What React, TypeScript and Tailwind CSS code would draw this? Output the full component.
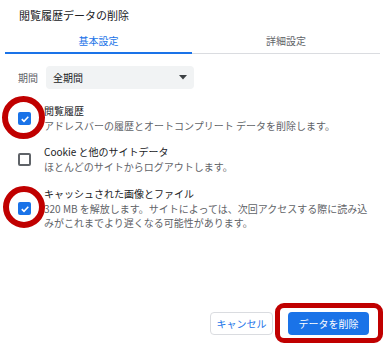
import React from "react";

function Checked() {
  return (
    <div className="w-[13px] h-[13px] rounded-[2px] bg-[#1a73e8] flex items-center justify-center shrink-0">
      <svg width="10" height="10" viewBox="0 0 10 10">
        <path d="M1.8 5.2 L4 7.3 L8.3 2.8" fill="none" stroke="white" strokeWidth="1.6" />
      </svg>
    </div>
  );
}

function Unchecked() {
  return <div className="w-[13px] h-[13px] rounded-[2px] border-2 border-[#5f6368] shrink-0" />;
}

function Item({
  checked,
  title,
  children,
  className,
}: {
  checked: boolean;
  title: string;
  children: React.ReactNode;
  className: string;
}) {
  return (
    <div className={"flex items-center pl-[18px] " + className}>
      {checked ? <Checked /> : <Unchecked />}
      <div className="ml-[13px] w-[330px] text-[10px] leading-[14.5px] whitespace-nowrap">
        <div className="text-[#202124]">{title}</div>
        <div className="text-[#5f6368]">{children}</div>
      </div>
    </div>
  );
}

export default function App() {
  return (
    <div
      className="w-[390px] h-[351px] bg-white relative overflow-hidden flex flex-col"
      style={{ fontFamily: '"Noto Sans CJK JP", "Noto Sans", sans-serif' }}
    >
      <div className="pl-[19px] pt-[8px] text-[11px] leading-[14px] text-[#202124]">閲覧履歴データの削除</div>

      <div className="flex ml-[5px] w-[375px]">
        <div className="w-[187px] h-[32px] box-border border-b-2 border-[#1a73e8] pt-[12px] text-center text-[10px] leading-[14px] text-[#1a73e8]">
          基本設定
        </div>
        <div className="w-[188px] h-[32px] box-border border-b border-[#dadce0] pt-[12px] text-center text-[10px] leading-[14px] text-[#5f6368]">
          詳細設定
        </div>
      </div>

      <div className="flex items-center pl-[18px] mt-[12px]">
        <div className="w-[28px] text-[10px] text-[#5f6368]">期間</div>
        <div className="w-[148px] h-[23px] bg-[#f1f3f4] rounded-[4px] pl-[7px] pr-[7px] flex items-center justify-between">
          <span className="text-[10px] text-[#202124]">全期間</span>
          <svg width="8" height="5" viewBox="0 0 8 5">
            <path d="M0 0 L8 0 L4 4.5 Z" fill="#3c4043" />
          </svg>
        </div>
      </div>

      <Item checked title="閲覧履歴" className="mt-[15px]">
        アドレスバーの履歴とオートコンプリート データを削除します。
      </Item>
      <Item checked={false} title="Cookie と他のサイトデータ" className="mt-[12px]">
        ほとんどのサイトからログアウトします。
      </Item>
      <Item checked title="キャッシュされた画像とファイル" className="mt-[13px]">
        320 MB を解放します。サイトによっては、次回アクセスする際に読み込
        <br />
        みがこれまでより遅くなる可能性があります。
      </Item>

      <div className="mt-auto mb-[16px] flex justify-end pr-[21px] gap-[15px]">
        <button className="w-[63px] h-[23px] rounded-[4px] border border-[#dadce0] bg-white text-[10px] text-[#1a73e8]">
          キャンセル
        </button>
        <button className="w-[81px] h-[23px] rounded-[4px] bg-[#1a73e8] text-[10px] text-white">
          データを削除
        </button>
      </div>

      <div className="absolute left-[2px] top-[96px] w-[43px] h-[43px] rounded-full border-[6px] border-[#c00000]" />
      <div className="absolute left-[3px] top-[186px] w-[42px] h-[42px] rounded-full border-[6px] border-[#c00000]" />
      <div className="absolute left-[275px] top-[303px] w-[108px] h-[40px] rounded-[9px] border-[5px] border-[#c00000]" />
    </div>
  );
}
